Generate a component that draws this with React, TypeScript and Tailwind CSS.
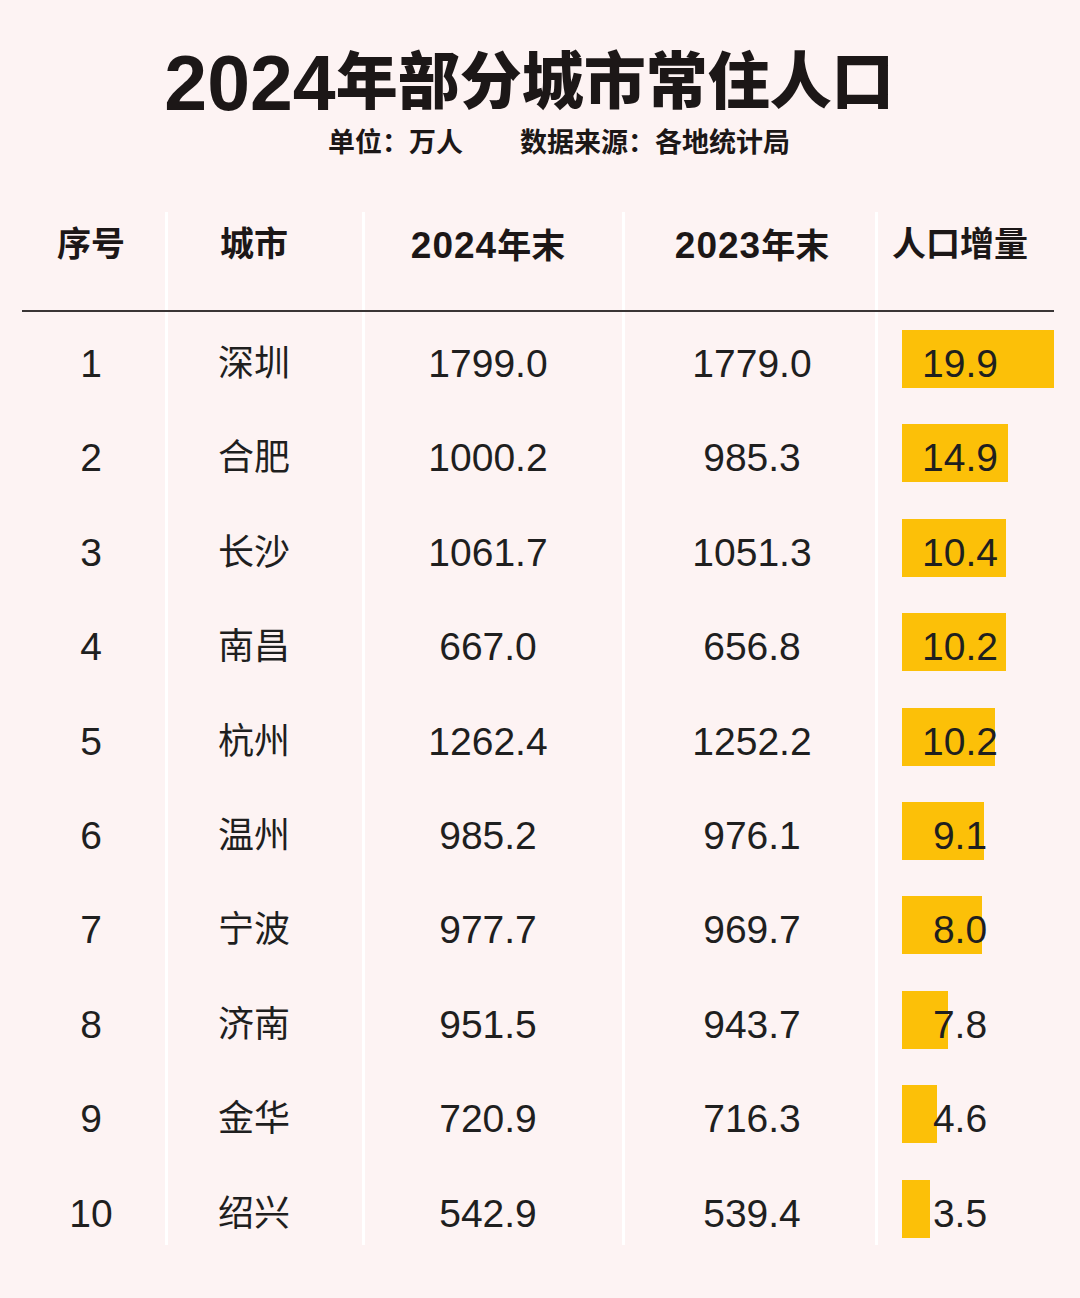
const rows = [
  { no: '1', city: '深圳', y24: '1799.0', y23: '1779.0', inc: '19.9', bar: 152 },
  { no: '2', city: '合肥', y24: '1000.2', y23: '985.3', inc: '14.9', bar: 106 },
  { no: '3', city: '长沙', y24: '1061.7', y23: '1051.3', inc: '10.4', bar: 104 },
  { no: '4', city: '南昌', y24: '667.0', y23: '656.8', inc: '10.2', bar: 104 },
  { no: '5', city: '杭州', y24: '1262.4', y23: '1252.2', inc: '10.2', bar: 93 },
  { no: '6', city: '温州', y24: '985.2', y23: '976.1', inc: '9.1', bar: 82 },
  { no: '7', city: '宁波', y24: '977.7', y23: '969.7', inc: '8.0', bar: 80 },
  { no: '8', city: '济南', y24: '951.5', y23: '943.7', inc: '7.8', bar: 46 },
  { no: '9', city: '金华', y24: '720.9', y23: '716.3', inc: '4.6', bar: 35 },
  { no: '10', city: '绍兴', y24: '542.9', y23: '539.4', inc: '3.5', bar: 28 },
];

const font = "font-['Liberation_Sans','Noto_Sans_CJK_SC',sans-serif]";
const divider = 'border-r-[3px] border-white';

export default function App() {
  return (
    <div className={`w-[1080px] h-[1298px] bg-[#fdf3f3] text-[#1c1717] ${font}`}>
      {/* title */}
      <div className="pt-[48px] flex justify-center pr-[22px]">
        <h1 className="h-[70px] flex items-center text-[62px] leading-none font-black whitespace-nowrap">
          <span className="text-[77px] font-bold">2024</span>
          <span>年部分城市常住人口</span>
        </h1>
      </div>
      <div className="mt-[9px] flex justify-center pl-[38px] text-[27px] leading-[32px] font-bold">
        <span>单位：万人</span>
        <span className="ml-[57px]">数据来源：各地统计局</span>
      </div>

      {/* table */}
      <div className="mt-[53px] ml-[22px] w-[1032px]">
        <div className="grid grid-cols-[146px_197px_260px_253px_176px] h-[98px] text-[34px] font-bold leading-none">
          <div className={`${divider} pr-[5px] pt-[15px] text-center`}>序号</div>
          <div className={`${divider} pr-[22px] pt-[15px] text-center`}>城市</div>
          <div className={`${divider} pr-[11px] pt-[15px] text-center`}>
            <span className="text-[37px] tracking-[1px]">2024</span>年末
          </div>
          <div className={`${divider} pl-[4px] pt-[15px] text-center`}>
            <span className="text-[37px] tracking-[1px]">2023</span>年末
          </div>
          <div className="pr-[12px] pt-[15px] text-center">人口增量</div>
        </div>
        <div className="h-[2px] bg-[#3a3535]" />
        {rows.map((r, i) => (
          <div
            key={r.no}
            className={`grid grid-cols-[146px_197px_260px_253px_176px] items-start text-[39px] leading-none text-[#1f1f1f] ${
              i === rows.length - 1 ? 'h-[83px]' : 'h-[94.4px]'
            }`}
          >
            <div className={`${divider} h-full flex justify-center pr-[5px] pt-[32px]`}>{r.no}</div>
            <div className={`${divider} h-full flex justify-center pr-[22px] pt-[34px] text-[36px]`}>{r.city}</div>
            <div className={`${divider} h-full flex justify-center pr-[11px] pt-[32px]`}>{r.y24}</div>
            <div className={`${divider} h-full flex justify-center pl-[4px] pt-[32px]`}>{r.y23}</div>
            <div className="relative h-full flex justify-center pr-[12px] pt-[32px]">
              <div
                className="absolute left-[24px] top-[18px] h-[58px] bg-[#fcc008]"
                style={{ width: r.bar }}
              />
              <span className="relative">{r.inc}</span>
            </div>
          </div>
        ))}
      </div>
    </div>
  );
}
